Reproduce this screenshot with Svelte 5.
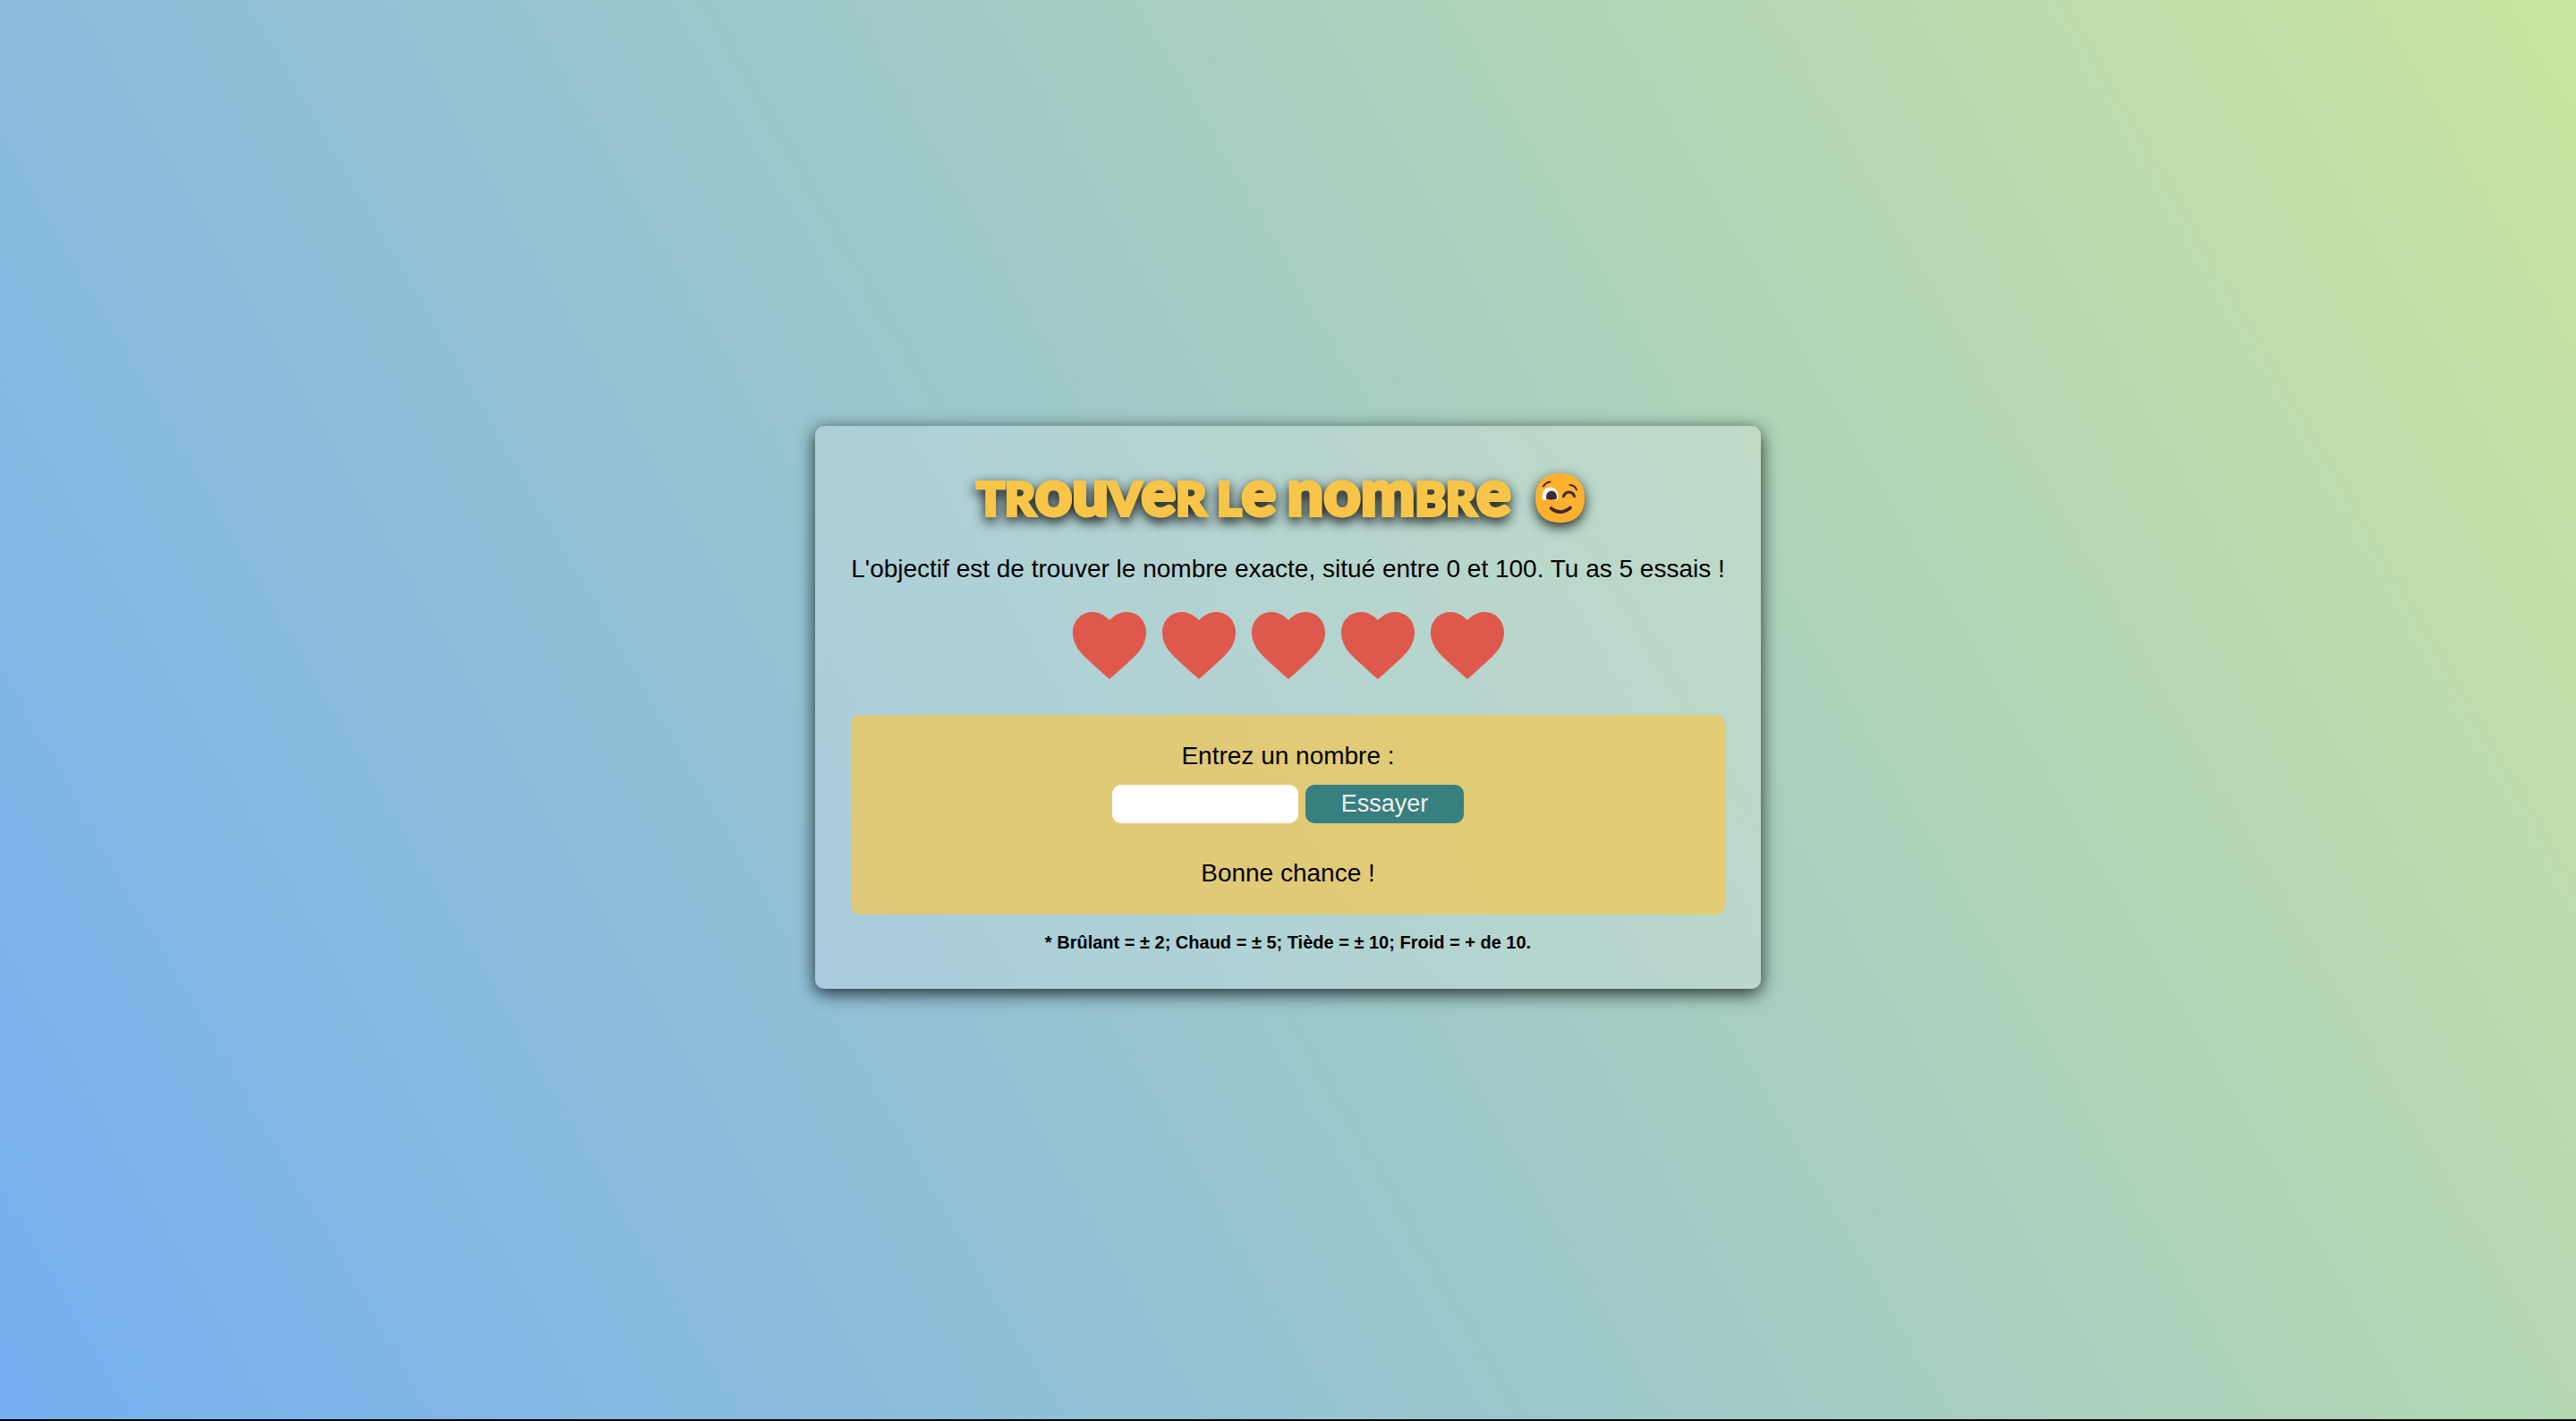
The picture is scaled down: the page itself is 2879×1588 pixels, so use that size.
<script>
  const lives = [1, 2, 3, 4, 5];
  let guess = $state('');
  let message = $state('Bonne chance !');
  const target = Math.floor(Math.random() * 101);

  function submit(event) {
    event.preventDefault();
    const gap = Math.abs(Number(guess) - target);
    if (gap === 0) message = 'Bravo !';
    else if (gap <= 2) message = 'Brûlant';
    else if (gap <= 5) message = 'Chaud';
    else if (gap <= 10) message = 'Tiède';
    else message = 'Froid';
  }
</script>

<main>
  <section class="card">
    <h1>
      <span class="title">T<span class="cap">r</span><span class="low">ou</span><span class="cap">v</span><span class="low">e</span><span class="cap">r</span> <span class="cap">l</span><span class="low">e</span> <span class="low">nom</span><span class="cap">br</span><span class="low">e</span></span>
      <svg class="wink" viewBox="0 0 55 55" role="img" aria-label="Clin d'œil">
        <path d="M27.500 0C45 0 55 10 55 27.500S45 55 27.500 55 0 45 0 27.500 10 0 27.500 0Z" fill="#ffb02e" />
        <path d="M9.500 30C6 28 7 15.500 16.500 15.500S27.500 28 24 30C20 28.500 14 28.500 9.500 30Z" fill="#fff" />
        <path d="M12.500 29C11 24 13.500 19.500 18 19.500S25 24 23.500 29C20 29.500 15.500 29.500 12.500 29Z" fill="#402a32" />
        <g fill="none" stroke="#402a32" stroke-linecap="round">
          <path d="M9 14.500Q11.500 10 16.500 9.500" stroke-width="2" />
          <path d="M38.500 13Q44.500 13.500 46 18.500" stroke-width="2" />
          <path d="M31.500 25.500C33.500 19.500 41.500 19.500 43.500 25.500" stroke-width="3.200" />
          <path d="M17.500 39Q28 47.500 39 38.500" stroke-width="3.600" />
        </g>
      </svg>
    </h1>
    <p class="goal">L'objectif est de trouver le nombre exacte, situé entre 0 et 100. Tu as 5 essais !</p>
    <div class="lives">
      {#each lives as life (life)}
        <svg viewBox="0 0 82 75" aria-hidden="true">
          <path d="M41 9C48 2 54 0 60 0C73 0 82 10 82 23C82 33 77 42 68 50.500C58 60 48 69 41 75C34 69 24 60 14 50.500C5 42 0 33 0 23C0 10 9 0 22 0C28 0 34 2 41 9Z" fill="#de594b" />
        </svg>
      {/each}
    </div>
    <form onsubmit={submit}>
      <label for="guess">Entrez un nombre :</label>
      <div class="row">
        <input id="guess" type="text" inputmode="numeric" autocomplete="off" bind:value={guess} />
        <button type="submit">Essayer</button>
      </div>
      <p class="message">{message}</p>
    </form>
    <p class="note">* Brûlant = ± 2; Chaud = ± 5; Tiède = ± 10; Froid = + de 10.</p>
  </section>
</main>

<style>
  main {
    box-sizing: border-box;
    min-height: 100vh;
    display: flex;
    align-items: center;
    justify-content: center;
    padding-bottom: 5px;
    border-bottom: 2px solid #000;
    background: linear-gradient(60deg, #76aff1 0%, #c9e59f 100%);
    font-family: 'Liberation Sans', Arial, sans-serif;
    font-size: 28px;
    line-height: 32px;
    color: #000;
    text-align: center;
  }
  .card {
    padding: 40px;
    border-radius: 10px;
    background: rgba(240, 240, 240, 0.25);
    box-shadow: 0 5px 20px rgba(0, 0, 0, 0.8);
  }
  h1 {
    box-sizing: border-box;
    margin: 0 0 24px;
    padding-right: 16px;
    display: flex;
    align-items: center;
    justify-content: center;
    gap: 28px;
    height: 80px;
    font-family: Lato, 'Liberation Sans', sans-serif;
    font-size: 52px;
    font-weight: 900;
    line-height: 80px;
    color: #f8c549;
  }
  .title {
    padding-bottom: 8px;
    -webkit-text-stroke: 4px #f8c549;
    paint-order: stroke fill;
    filter: drop-shadow(0 5px 7px rgba(0, 0, 0, 0.9));
  }
  .cap {
    text-transform: uppercase;
  }
  .low {
    font-size: 72px;
  }
  .wink {
    width: 55px;
    height: 55px;
    overflow: visible;
    filter: drop-shadow(0 5px 7px rgba(0, 0, 0, 0.8));
  }
  p {
    margin: 0;
  }
  .lives {
    display: flex;
    justify-content: center;
    gap: 18px;
    margin: 32px 0 40px;
  }
  .lives svg {
    width: 82px;
    height: 75px;
  }
  form {
    padding: 30px 32px;
    border-radius: 10px;
    background: rgba(247, 199, 73, 0.67);
  }
  label {
    display: block;
  }
  .row {
    display: flex;
    justify-content: center;
    gap: 8px;
    margin: 16px 0 40px;
  }
  input,
  button {
    box-sizing: border-box;
    height: 43px;
    border: 0;
    border-radius: 10px;
    font: inherit;
    font-size: 27px;
  }
  input {
    width: 208px;
    padding: 0 12px;
    background: #fff;
  }
  button {
    padding: 0 40px 2px;
    background: #387f7f;
    color: #f0f0f0;
  }
  .note {
    margin-top: 19px;
    font-size: 20px;
    font-weight: 700;
    line-height: 24px;
  }
</style>
